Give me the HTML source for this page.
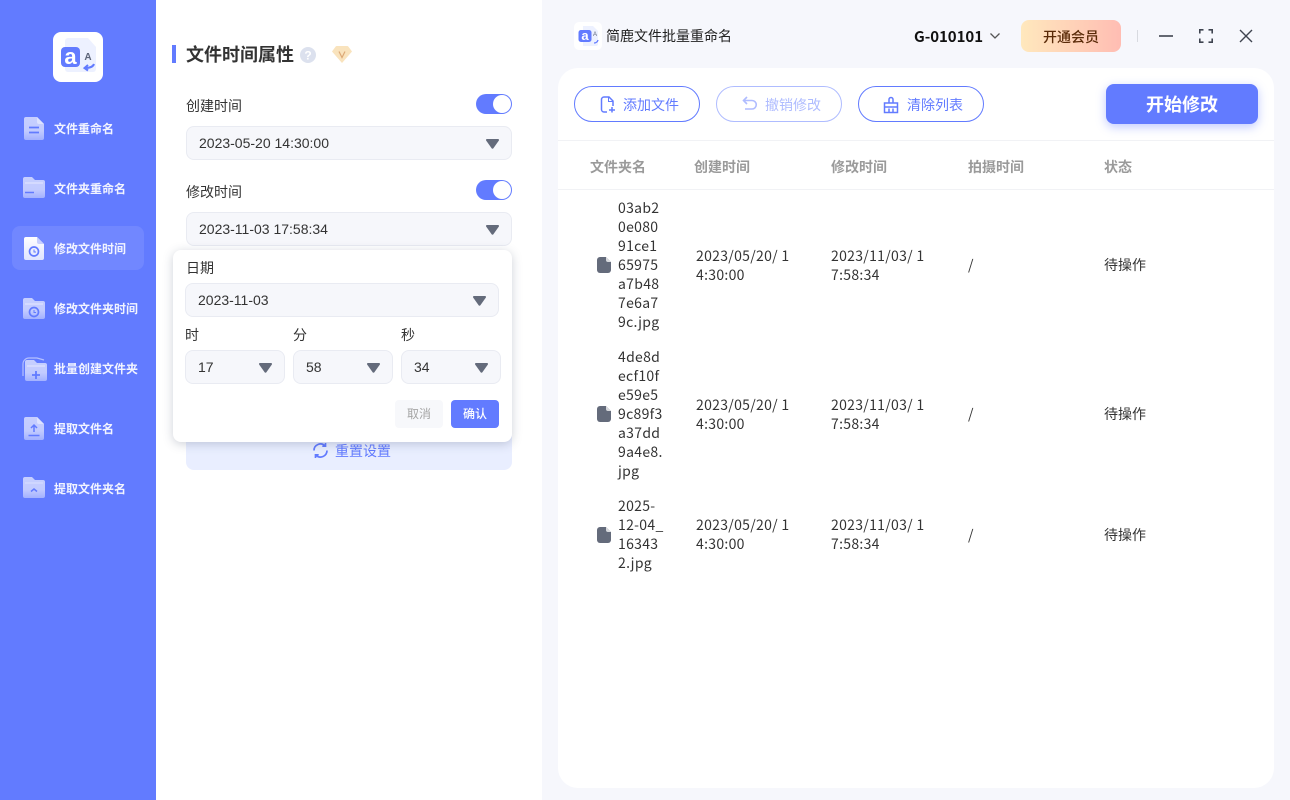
<!DOCTYPE html>
<html lang="zh"><head><meta charset="utf-8"><style>
*{box-sizing:border-box;margin:0;padding:0}
html,body{width:1290px;height:800px;overflow:hidden;background:#fff}
body{position:relative;font-family:"Noto Sans CJK SC","WenQuanYi Zen Hei",sans-serif;color:#333;font-size:14px}
.a{position:absolute;white-space:nowrap}
.nav{position:absolute;left:54px;font-size:12px;font-weight:700;color:#f2f4ff;line-height:18px;white-space:nowrap}
.ic{position:absolute}
.lab{position:absolute;font-size:14px;line-height:18px;color:#333;white-space:nowrap}
.sel{position:absolute;height:34px;background:#f6f7fb;border:1px solid #e9ebf2;border-radius:8px;font-family:"Liberation Sans",sans-serif;font-size:14px;line-height:32px;color:#333}
.sel span{position:absolute;left:12px;top:0}
.sel svg{position:absolute;top:12px;right:12px}
.tog{position:absolute;left:476px;width:36px;height:20px;border-radius:10px;background:#627bff}
.tog:after{content:"";position:absolute;right:1px;top:1px;width:18px;height:18px;border-radius:50%;background:#fff}
.btn{position:absolute;top:86px;height:36px;width:126px;border:1px solid #627bff;border-radius:18px;background:#fff;color:#627bff;font-size:14px;line-height:36px;padding-left:48px;white-space:nowrap}
.th{position:absolute;top:158px;font-size:14px;font-weight:700;color:#9a9a9a;line-height:18px;white-space:nowrap}
.td{position:absolute;font-size:14px;line-height:19px;color:#333;white-space:nowrap}
.n{letter-spacing:.3px}
</style></head><body>
<div class="a" style="left:0;top:0;width:156px;height:800px;background:#627bff"></div>
<div class="a" style="left:542px;top:0;width:748px;height:800px;background:#f6f7fc"></div>
<div class="a" style="left:558px;top:68px;width:716px;height:720px;background:#fff;border-radius:20px"></div>

<!-- logo -->
<svg class="ic" style="left:53px;top:32px" width="50" height="50" viewBox="0 0 50 50"><rect width="50" height="50" rx="8" fill="#fff"/><path d="M15 6h20l8 9v22a3 3 0 0 1-3 3H15a3 3 0 0 1-3-3V9a3 3 0 0 1 3-3z" fill="#edf1ff"/><rect x="8" y="15" width="19" height="20" rx="4" fill="#627bff"/><text x="17.500" y="32" font-family="Liberation Sans,sans-serif" font-size="22" font-weight="700" fill="#fff" text-anchor="middle">a</text><text x="35" y="28" font-family="Liberation Sans,sans-serif" font-size="10" font-weight="700" fill="#5c6478" text-anchor="middle">A</text><path d="M41 32c-1 3-4 4-9 4m3-3l-3.500 3 3.500 2.500" fill="none" stroke="#627bff" stroke-width="2"/></svg>

<!-- nav -->
<div class="a" style="left:12px;top:226px;width:132px;height:44px;background:#7187ff;border-radius:8px"></div>
<svg class="ic" style="left:0;top:0" width="156" height="520" viewBox="0 0 156 520">
<defs><linearGradient id="g" x1="0" y1="0" x2="0" y2="1"><stop offset="0" stop-color="#c6cfff"/><stop offset=".6" stop-color="#c2cbff"/><stop offset="1" stop-color="#a3b1ff"/></linearGradient><linearGradient id="w" x1="0" y1="0" x2="0" y2="1"><stop offset="0" stop-color="#fff"/><stop offset="1" stop-color="#dfe4ff"/></linearGradient></defs>
<path d="M26 117h11l7 7v14a2 2 0 0 1-2 2H26a2 2 0 0 1-2-2v-19a2 2 0 0 1 2-2z" fill="url(#g)"/><path d="M37 117l7 7h-5a2 2 0 0 1-2-2z" fill="#dde2ff"/><path d="M29 127.500h10M29 132.500h10" stroke="#627bff" stroke-width="1.800"/>
<path d="M25 177h7l3 3h8a2 2 0 0 1 2 2v14a2 2 0 0 1-2 2H25a2 2 0 0 1-2-2v-17a2 2 0 0 1 2-2z" fill="url(#g)"/><path d="M25 183h18" stroke="#d9deff" stroke-width="1.500"/><path d="M25 192.500h9" stroke="#627bff" stroke-width="1.500"/>
<path d="M26 237h11l7 7v14a2 2 0 0 1-2 2H26a2 2 0 0 1-2-2v-19a2 2 0 0 1 2-2z" fill="url(#w)"/><path d="M37 237l7 7h-5a2 2 0 0 1-2-2z" fill="#c6cfff"/><circle cx="34" cy="251.500" r="4.500" fill="none" stroke="#627bff" stroke-width="1.700"/><path d="M34 249.500v2.500h2" fill="none" stroke="#627bff"/>
<path d="M25 298h7l3 3h8a2 2 0 0 1 2 2v14a2 2 0 0 1-2 2H25a2 2 0 0 1-2-2v-17a2 2 0 0 1 2-2z" fill="url(#g)"/><path d="M25 304h18" stroke="#d9deff" stroke-width="1.500"/><circle cx="34" cy="312" r="4.500" fill="none" stroke="#627bff" stroke-width="1.700"/><path d="M34 310v2.500h2" fill="none" stroke="#627bff"/>
<path d="M23 376v-12a6 6 0 0 1 6-6h8l7 2" fill="none" stroke="#b5c0ff" stroke-width="1.200"/>
<path d="M27 360h7l3 3h8a2 2 0 0 1 2 2v14a2 2 0 0 1-2 2H27a2 2 0 0 1-2-2v-17a2 2 0 0 1 2-2z" fill="url(#g)"/><path d="M27 366h18" stroke="#d9deff" stroke-width="1.500"/><path d="M32 375h8M36 371v8" stroke="#627bff" stroke-width="1.800"/>
<path d="M26 417h11l7 7v14a2 2 0 0 1-2 2H26a2 2 0 0 1-2-2v-19a2 2 0 0 1 2-2z" fill="url(#g)"/><path d="M37 417l7 7h-5a2 2 0 0 1-2-2z" fill="#dde2ff"/><path d="M34 432v-7m-3 3l3-3 3 3M28.500 435.500h11" fill="none" stroke="#627bff" stroke-width="1.500"/>
<path d="M25 477h7l3 3h8a2 2 0 0 1 2 2v14a2 2 0 0 1-2 2H25a2 2 0 0 1-2-2v-17a2 2 0 0 1 2-2z" fill="url(#g)"/><path d="M25 483h18" stroke="#d9deff" stroke-width="1"/><path d="M31 491.500l3-2.500 3 2.500" fill="none" stroke="#627bff" stroke-width="1.500"/>
</svg>
<div class="nav" style="top:120px">文件重命名</div>
<div class="nav" style="top:180px">文件夹重命名</div>
<div class="nav" style="top:240px">修改文件时间</div>
<div class="nav" style="top:300px">修改文件夹时间</div>
<div class="nav" style="top:360px">批量创建文件夹</div>
<div class="nav" style="top:420px">提取文件名</div>
<div class="nav" style="top:480px">提取文件夹名</div>

<!-- settings -->
<div class="a" style="left:172px;top:45px;width:4px;height:18px;background:#627bff"></div>
<div class="a" style="left:186px;top:41px;font-size:18px;font-weight:700;line-height:27px;color:#333">文件时间属性</div>
<svg class="ic" style="left:300px;top:47px" width="16" height="16" viewBox="0 0 16 16"><circle cx="8" cy="8" r="8" fill="#dce1ee"/><text x="8" y="12.500" font-family="Liberation Sans,sans-serif" font-size="12" font-weight="700" fill="#fff" text-anchor="middle">?</text></svg>
<svg class="ic" style="left:330px;top:44px" width="24" height="22" viewBox="0 0 24 22"><path d="M7 2h10a2 2 0 0 1 1.500.7L22 7.500 12 19 2 7.500 5.500 2.700A2 2 0 0 1 7 2z" fill="#f9e3bd"/><path d="M9 7.500l3 6 3-6" fill="none" stroke="#dca876" stroke-width="1.200"/></svg>
<div class="lab" style="left:186px;top:97px">创建时间</div>
<div class="tog" style="top:94px"></div>
<div class="sel" style="left:186px;top:126px;width:326px"><span>2023-05-20 14:30:00</span><svg width="13" height="10" viewBox="0 0 13 10"><path d="M1 0h11a1 1 0 0 1 .8 1.600L7.300 9.400a1 1 0 0 1-1.600 0L.2 1.600A1 1 0 0 1 1 0z" fill="#646b7b"/></svg></div>
<div class="lab" style="left:186px;top:183px">修改时间</div>
<div class="tog" style="top:180px"></div>
<div class="sel" style="left:186px;top:212px;width:326px"><span>2023-11-03 17:58:34</span><svg width="13" height="10" viewBox="0 0 13 10"><path d="M1 0h11a1 1 0 0 1 .8 1.600L7.300 9.400a1 1 0 0 1-1.600 0L.2 1.600A1 1 0 0 1 1 0z" fill="#646b7b"/></svg></div>

<div class="a" style="left:186px;top:430px;width:326px;height:40px;background:#e9eeff;border-radius:8px"></div>
<svg class="ic" style="left:312px;top:442px" width="17" height="17" viewBox="0 0 17 17" fill="none" stroke="#627bff" stroke-width="1.700"><path d="M2 8.500a6.500 6.500 0 0 1 11-4.700M15 8.500a6.500 6.500 0 0 1-11 4.700"/><path d="M13.500 1v3.200h-3.200M3.500 16v-3.200h3.200"/></svg>
<div class="a" style="left:335px;top:442px;font-size:14px;line-height:18px;color:#627bff">重置设置</div>

<!-- popup -->
<div class="a" style="left:173px;top:250px;width:339px;height:192px;background:#fff;border-radius:8px;box-shadow:0 2px 10px rgba(60,70,100,.25)"></div>
<div class="lab" style="left:186px;top:259px">日期</div>
<div class="sel" style="left:185px;top:283px;width:314px"><span>2023-11-03</span><svg width="13" height="10" viewBox="0 0 13 10"><path d="M1 0h11a1 1 0 0 1 .8 1.600L7.300 9.400a1 1 0 0 1-1.600 0L.2 1.600A1 1 0 0 1 1 0z" fill="#646b7b"/></svg></div>
<div class="lab" style="left:185px;top:326px">时</div>
<div class="lab" style="left:293px;top:326px">分</div>
<div class="lab" style="left:401px;top:326px">秒</div>
<div class="sel" style="left:185px;top:350px;width:100px"><span>17</span><svg width="13" height="10" viewBox="0 0 13 10"><path d="M1 0h11a1 1 0 0 1 .8 1.600L7.300 9.400a1 1 0 0 1-1.600 0L.2 1.600A1 1 0 0 1 1 0z" fill="#646b7b"/></svg></div>
<div class="sel" style="left:293px;top:350px;width:100px"><span>58</span><svg width="13" height="10" viewBox="0 0 13 10"><path d="M1 0h11a1 1 0 0 1 .8 1.600L7.300 9.400a1 1 0 0 1-1.600 0L.2 1.600A1 1 0 0 1 1 0z" fill="#646b7b"/></svg></div>
<div class="sel" style="left:401px;top:350px;width:100px"><span>34</span><svg width="13" height="10" viewBox="0 0 13 10"><path d="M1 0h11a1 1 0 0 1 .8 1.600L7.300 9.400a1 1 0 0 1-1.600 0L.2 1.600A1 1 0 0 1 1 0z" fill="#646b7b"/></svg></div>
<div class="a" style="left:395px;top:400px;width:48px;height:28px;background:#f7f8fb;border-radius:4px;color:#a5a5a5;font-size:12px;line-height:28px;text-align:center">取消</div>
<div class="a" style="left:451px;top:400px;width:48px;height:28px;background:#627bff;border-radius:4px;color:#fff;font-size:12px;font-weight:500;line-height:28px;text-align:center">确认</div>

<!-- title bar -->
<svg class="ic" style="left:574px;top:22px" width="28" height="28" viewBox="0 0 28 28"><rect width="28" height="28" rx="5" fill="#fff"/><path d="M9 4h10l5 5v13a2 2 0 0 1-2 2H9z" fill="#edf1ff"/><rect x="4.500" y="8" width="13" height="12" rx="2.500" fill="#627bff"/><text x="11" y="18" font-family="Liberation Sans,sans-serif" font-size="13" font-weight="700" fill="#fff" text-anchor="middle">a</text><text x="21" y="14" font-family="Liberation Sans,sans-serif" font-size="6" fill="#5c6478" text-anchor="middle">A</text><path d="M24 18c-.5 2-2 3-4 3" fill="none" stroke="#627bff" stroke-width="1.300"/></svg>
<div class="a" style="left:606px;top:27px;font-size:14px;line-height:19px;color:#222">简鹿文件批量重命名</div>
<div class="a" style="left:914px;top:27px;font-size:15px;font-weight:700;line-height:20px;color:#111;letter-spacing:-.05px">G-010101</div>
<svg class="ic" style="left:989px;top:31px" width="12" height="10" viewBox="0 0 12 10"><path d="M1.500 2.500L6 7l4.500-4.500" fill="none" stroke="#555" stroke-width="1.300"/></svg>
<div class="a" style="left:1021px;top:20px;width:100px;height:32px;border-radius:8px;background:linear-gradient(90deg,#ffe8bd,#ffbdb3);color:#5a2a08;font-size:14px;font-weight:500;line-height:34px;text-align:center">开通会员</div>
<div class="a" style="left:1137px;top:30px;width:1px;height:12px;background:#d8dae0"></div>
<svg class="ic" style="left:1156px;top:26px" width="100" height="20" viewBox="0 0 100 20" fill="none" stroke="#3f4450" stroke-width="1.600"><path d="M3 10h14"/><path d="M43.800 7.500V3.800h3.700M52.500 3.800h3.700v3.700M56.200 12.500v3.700h-3.700M47.500 16.200h-3.700v-3.700"/><path d="M84 4l12 12M96 4L84 16" stroke-width="1.400"/></svg>

<!-- toolbar -->
<div class="btn" style="left:574px">添加文件</div>
<div class="btn" style="left:716px;opacity:.5">撤销修改</div>
<div class="btn" style="left:858px">清除列表</div>
<svg class="ic" style="left:598px;top:95px" width="18" height="18" viewBox="0 0 18 18" fill="none" stroke="#627bff" stroke-width="1.500"><path d="M9 17H6a2.500 2.500 0 0 1-2.500-2.500v-10A2.500 2.500 0 0 1 6 2h5l4 4v5"/><path d="M10.500 2.500v4h4.500" stroke-width="1"/><path d="M11 15h6M14 12v5.500"/></svg>
<svg class="ic" style="left:740px;top:95px;opacity:.5" width="18" height="18" viewBox="0 0 18 18" fill="none" stroke="#627bff" stroke-width="1.600"><path d="M7 2L3.500 5.500 7 9"/><path d="M3.500 5.500H12a4.200 4.200 0 0 1 0 8.500H5"/></svg>
<svg class="ic" style="left:882px;top:96px" width="18" height="18" viewBox="0 0 18 18" fill="none" stroke="#627bff" stroke-width="1.500"><path d="M7 7V3.500a2 2 0 0 1 4 0V7"/><path d="M2.500 7h13v4h-13zM2.500 11v5.500h13V11M7 12.500v4M11 12.500v4"/></svg>
<div class="a" style="left:1106px;top:84px;width:152px;height:40px;background:#627bff;border-radius:8px;box-shadow:0 3px 10px rgba(98,123,255,.4);color:#fff;font-size:18px;font-weight:700;line-height:40px;text-align:center">开始修改</div>

<!-- table -->
<div class="a" style="left:558px;top:140px;width:716px;height:1px;background:#f1f2f5"></div>
<div class="a" style="left:558px;top:189px;width:716px;height:1px;background:#f1f2f5"></div>
<div class="th" style="left:590px">文件夹名</div>
<div class="th" style="left:694px">创建时间</div>
<div class="th" style="left:831px">修改时间</div>
<div class="th" style="left:968px">拍摄时间</div>
<div class="th" style="left:1104px">状态</div>

<svg class="ic" style="left:597px;top:257px" width="14" height="16" viewBox="0 0 14 16"><path d="M3 0h6l5 5v8a3 3 0 0 1-3 3H3a3 3 0 0 1-3-3V3a3 3 0 0 1 3-3z" fill="#646b7b"/><path d="M9 0v3a2 2 0 0 0 2 2h3z" fill="#fff" opacity=".75"/></svg>
<div class="td n" style="left:618px;top:199px">03ab2<br>0e080<br>91ce1<br>65975<br>a7b48<br>7e6a7<br>9c.jpg</div>
<div class="td n" style="left:696px;top:247px">2023/05/20/ 1<br>4:30:00</div>
<div class="td n" style="left:831px;top:247px">2023/11/03/ 1<br>7:58:34</div>
<div class="td" style="left:968px;top:256px">/</div>
<div class="td" style="left:1104px;top:256px">待操作</div>

<svg class="ic" style="left:597px;top:406px" width="14" height="16" viewBox="0 0 14 16"><path d="M3 0h6l5 5v8a3 3 0 0 1-3 3H3a3 3 0 0 1-3-3V3a3 3 0 0 1 3-3z" fill="#646b7b"/><path d="M9 0v3a2 2 0 0 0 2 2h3z" fill="#fff" opacity=".75"/></svg>
<div class="td n" style="left:618px;top:348px">4de8d<br>ecf10f<br>e59e5<br>9c89f3<br>a37dd<br>9a4e8.<br>jpg</div>
<div class="td n" style="left:696px;top:396px">2023/05/20/ 1<br>4:30:00</div>
<div class="td n" style="left:831px;top:396px">2023/11/03/ 1<br>7:58:34</div>
<div class="td" style="left:968px;top:405px">/</div>
<div class="td" style="left:1104px;top:405px">待操作</div>

<svg class="ic" style="left:597px;top:527px" width="14" height="16" viewBox="0 0 14 16"><path d="M3 0h6l5 5v8a3 3 0 0 1-3 3H3a3 3 0 0 1-3-3V3a3 3 0 0 1 3-3z" fill="#646b7b"/><path d="M9 0v3a2 2 0 0 0 2 2h3z" fill="#fff" opacity=".75"/></svg>
<div class="td n" style="left:618px;top:497px">2025-<br>12-04_<br>16343<br>2.jpg</div>
<div class="td n" style="left:696px;top:516px">2023/05/20/ 1<br>4:30:00</div>
<div class="td n" style="left:831px;top:516px">2023/11/03/ 1<br>7:58:34</div>
<div class="td" style="left:968px;top:526px">/</div>
<div class="td" style="left:1104px;top:526px">待操作</div>
</body></html>
